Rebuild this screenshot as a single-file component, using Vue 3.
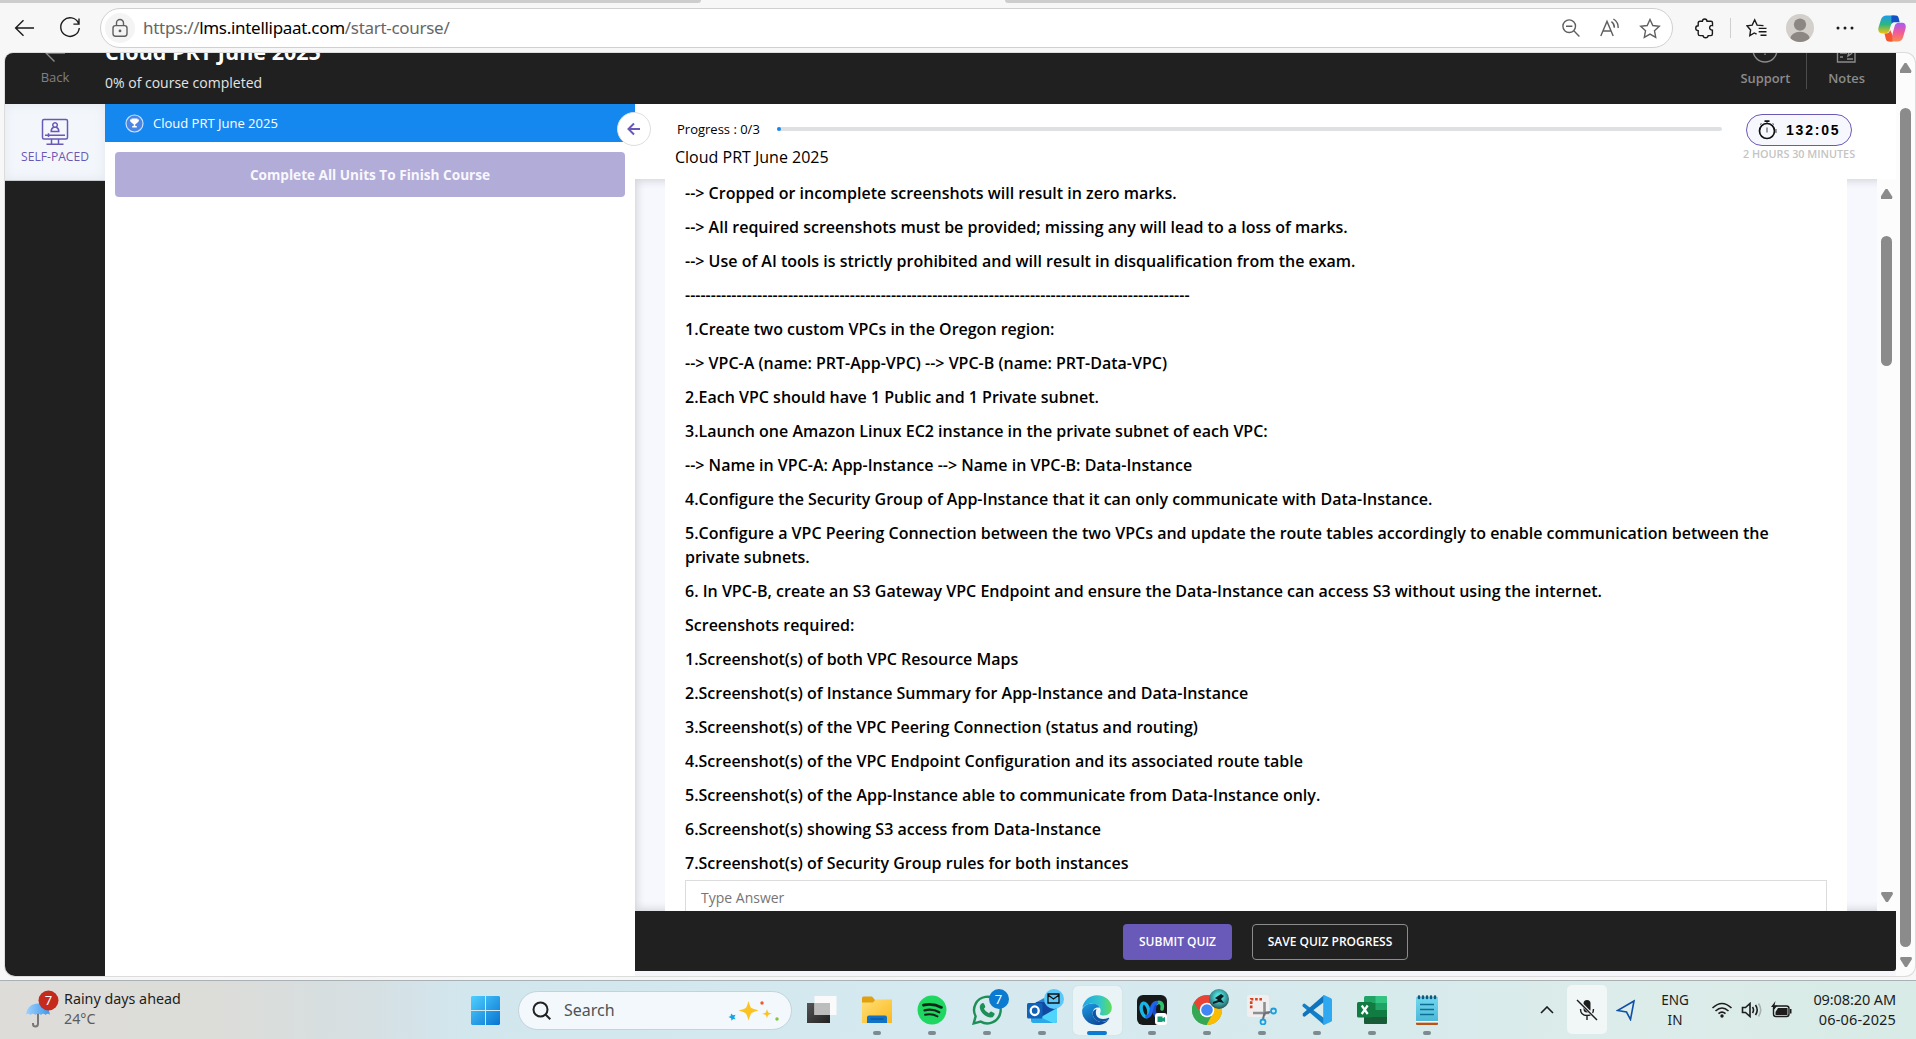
<script setup>
const lines = [
  '--> Cropped or incomplete screenshots will result in zero marks.',
  '--> All required screenshots must be provided; missing any will lead to a loss of marks.',
  '--> Use of AI tools is strictly prohibited and will result in disqualification from the exam.',
  '-'.repeat(98),
  '1.Create two custom VPCs in the Oregon region:',
  '--> VPC-A (name: PRT-App-VPC) --> VPC-B (name: PRT-Data-VPC)',
  '2.Each VPC should have 1 Public and 1 Private subnet.',
  '3.Launch one Amazon Linux EC2 instance in the private subnet of each VPC:',
  '--> Name in VPC-A: App-Instance --> Name in VPC-B: Data-Instance',
  '4.Configure the Security Group of App-Instance that it can only communicate with Data-Instance.',
  '5.Configure a VPC Peering Connection between the two VPCs and update the route tables accordingly to enable communication between the private subnets.',
  '6. In VPC-B, create an S3 Gateway VPC Endpoint and ensure the Data-Instance can access S3 without using the internet.',
  'Screenshots required:',
  '1.Screenshot(s) of both VPC Resource Maps',
  '2.Screenshot(s) of Instance Summary for App-Instance and Data-Instance',
  '3.Screenshot(s) of the VPC Peering Connection (status and routing)',
  '4.Screenshot(s) of the VPC Endpoint Configuration and its associated route table',
  '5.Screenshot(s) of the App-Instance able to communicate from Data-Instance only.',
  '6.Screenshot(s) showing S3 access from Data-Instance',
  '7.Screenshot(s) of Security Group rules for both instances',
]
</script>

<template>
  <div class="screen">
    <div class="tabs"><i class="tab-left"></i><i class="tab-right"></i></div>

    <header class="toolbar">
      <svg class="nav-back" width="22" height="20" viewBox="0 0 22 20"><path d="M20 10H2M9.5 2.2 1.6 10l7.9 7.8" /></svg>
      <svg class="nav-reload" width="24" height="24" viewBox="0 0 24 24"><path d="M20.5 7.2A9.3 9.3 0 1 0 21.3 12M21 2.5v5.6h-5.6" /></svg>
      <div class="address">
        <span class="lock">
          <svg width="18" height="20" viewBox="0 0 18 20"><rect x="2" y="7.6" width="14" height="10.6" rx="2.4" /><path d="M5.5 7.5V5a3.5 3.5 0 0 1 7 0v2.5" /><circle cx="9" cy="12.9" r="0.7" /></svg>
        </span>
        <span class="url">https://<b>lms.intellipaat.com</b>/start-course/</span>
        <span class="addr-icons">
          <svg width="20" height="20" viewBox="0 0 20 20"><circle cx="8.2" cy="8.2" r="6.3" /><path d="M5 8.2h6.4M12.8 12.8l5.6 5.6" /></svg>
          <svg width="22" height="20" viewBox="0 0 22 20"><path d="M1.8 18 8 3.4 14.2 18M4 13h8M12.4 3.7q3 1.9 3 6M14.4 1q5 3 4.8 9" /></svg>
          <svg width="22" height="21" viewBox="0 0 22 21"><path d="m11 1.500 2.800 6 6.500.8-4.800 4.500 1.200 6.500-5.700-3.200-5.700 3.200 1.200-6.500L1.700 8.300l6.500-.8z" /></svg>
        </span>
      </div>
      <div class="tools">
        <svg class="t-ext" width="22" height="22" viewBox="0 0 22 22"><path d="M6 4.200h2.400c.1-3 4.500-3 4.600 0H17q1.500 0 1.500 1.500V8.500c-3.400-.8-4.200 4.600-.1 4.700v3.900q0 1.500-1.500 1.500h-2.700c-.5 2.800-4.700 2.800-5.200 0H6q-1.800 0-1.800-1.700V13.600c-3.300-.2-3.300-4.600 0-4.800V6Q4.200 4.200 6 4.200z" /></svg>
        <i class="t-sep"></i>
        <svg class="t-fav" width="22" height="20" viewBox="0 0 22 20"><path d="M10.600 16.200 8.300 15l-4.500 2.700.8-5.700L1 7.800l5.200-.7 2.500-5.300 2.400 5.300 6.400.5M12.700 10.400h7.800M12.700 13.800h7.800M14.500 17.200h6" /></svg>
        <svg class="t-user" width="28" height="28" viewBox="0 0 28 28"><clipPath id="uc"><circle cx="14" cy="14" r="14" /></clipPath><g clip-path="url(#uc)"><rect width="28" height="28" fill="#d3d0cb" /><circle cx="14" cy="10.600" r="6.100" fill="#8c8782" /><ellipse cx="14" cy="25" rx="10" ry="7.200" fill="#8c8782" /></g></svg>
        <svg class="t-more" width="18" height="4" viewBox="0 0 18 4"><circle cx="2" cy="2" r="1.500" /><circle cx="9" cy="2" r="1.500" /><circle cx="16" cy="2" r="1.500" /></svg>
        <svg class="t-cop" width="28" height="27" viewBox="0 0 28 27">
          <defs>
            <linearGradient id="ca" x1="0" y1="0" x2="0" y2="1"><stop offset="0" stop-color="#1d9bf0" /><stop offset=".5" stop-color="#2eb67d" /><stop offset="1" stop-color="#f4c20d" /></linearGradient>
            <linearGradient id="cb" x1="0" y1="0" x2="0" y2="1"><stop offset="0" stop-color="#a45cf5" /><stop offset=".5" stop-color="#f0599b" /><stop offset="1" stop-color="#f98a4b" /></linearGradient>
          </defs>
          <path fill="url(#ca)" d="M8.500.5H17c-1.800 1-2.400 3.400-3 5.500L11.500 15c-.7 2.300-2 3.500-4.500 3.500H4C1 18.500-.2 16 .5 12.500L3 4.500C4 1.800 5.800.5 8.500.5z" />
          <path fill="#1352c4" d="M13.500.5H18c1.500 0 2.400 1.200 2.800 3l.8 3.800H17c-2 0-3 .6-3.700 2.300z" />
          <path fill="url(#cb)" d="M19.500 26.500H11c1.800-1 2.400-3.400 3-5.500l2.500-9.500c.7-2.600 2-3.700 4.500-3.700h3.300c2.600 0 4 2.200 3.300 5.700l-2.600 9c-.8 2.600-2.800 4-5.500 4z" />
          <path fill="#f4572e" d="M14.500 26.500H10.600c-1.600 0-2.500-1.200-2.900-3L6.500 18.500H8c2.300 0 3.300-1 4.200-3.500l1.800 4z" />
        </svg>
      </div>
    </header>

    <main class="page">
      <div class="app">
        <div class="top">
          <div class="back"><svg width="22" height="20" viewBox="0 0 22 20"><path d="M21 10H2M10 2 2 10l8.500 8.500" /></svg><span>Back</span></div>
          <div class="course"><h1>Cloud PRT June 2025</h1><p>0% of course completed</p></div>
          <div class="top-right">
            <div class="support"><svg width="28" height="28" viewBox="0 0 28 28"><circle cx="14" cy="14" r="12" /><path d="M14 8v6.500M14 17.500v1.500" /></svg><span>Support</span></div>
            <i></i>
            <div class="notes"><svg width="24" height="24" viewBox="0 0 24 24"><path d="M14 2H2.500v20H20V13M5 13h7M5 17h3M12 19h6M5 9h8M13 16l1-4 7-8 2 2-7 8z" /></svg><span>Notes</span></div>
          </div>
        </div>
        <div class="body">
          <nav class="rail">
            <div class="self">
              <svg width="28" height="28" viewBox="0 0 28 28"><rect x="1.500" y="1.500" width="25" height="19.500" rx="1.500" /><path d="M4 17.200h20M7.500 15.300v3.800M10.500 21v4.500M17.500 21v4.500M5.500 26.200h17" /><path class="fine" d="M10.200 13.500q0-3.500 2.600-4.200h2.400q2.600.7 2.600 4.200zM14 9.300a2.300 2.300 0 1 1 .1 0z" /></svg>
              <span>SELF-PACED</span>
            </div>
          </nav>
          <aside class="side">
            <div class="unit">
              <svg width="19" height="19" viewBox="0 0 19 19"><circle cx="9.500" cy="9.500" r="8.500" fill="#4a86e8" stroke="#c9e0fb" stroke-width="1.200" /><path fill="#fff" d="M6.500 4.500h6v1h1.500c0 2-.8 3-2 3.200-.4.800-1 1.200-1.700 1.400v1.800h1.500v1.600H7.200v-1.600h1.500v-1.800c-.7-.2-1.300-.6-1.700-1.400-1.200-.2-2-1.200-2-3.200h1.500z" /></svg>
              <span>Cloud PRT June 2025</span>
            </div>
            <button class="finish">Complete All Units To Finish Course</button>
          </aside>
          <section class="main">
            <span class="collapse"><svg width="14" height="14" viewBox="0 0 14 14"><path d="M13 7H1.500M7 1.500 1.500 7 7 12.500" /></svg></span>
            <div class="quiz-head">
              <div class="qh-left">
                <div class="progress"><span>Progress : 0/3</span><div class="bar"><i></i></div></div>
                <h2>Cloud PRT June 2025</h2>
              </div>
              <div class="qh-right">
                <div class="timer">
                  <svg width="20" height="20" viewBox="0 0 20 20"><circle cx="9" cy="11" r="7.500" /><path d="M6.500 1.200h5" /><path class="thin" d="M9 1.500V3M9 7.500v5m-7-8 1.500-1M16 4.500l-1.500-1M18 9v4" /></svg>
                  <span>132:05</span>
                </div>
                <div class="dur">2 HOURS 30 MINUTES</div>
              </div>
            </div>
            <div class="quiz-body">
              <div class="sheet">
                <p v-for="(l, i) in lines" :key="i">{{ l }}</p>
                <div class="answer">Type Answer</div>
              </div>
              <div class="inner-scroll">
                <i class="up"></i><i class="thumb"></i><i class="down"></i>
              </div>
            </div>
            <div class="actions">
              <button class="submit">SUBMIT QUIZ</button>
              <button class="save">SAVE QUIZ PROGRESS</button>
            </div>
          </section>
        </div>
        <div class="under"></div>
      </div>
      <div class="outer-scroll"><i class="up"></i><i class="thumb"></i><i class="down"></i></div>
    </main>

    <footer class="taskbar">
      <div class="weather">
        <svg width="34" height="38" viewBox="0 0 34 38">
          <defs><linearGradient id="um" x1="0" x2="1"><stop offset="0" stop-color="#9fd0fb" /><stop offset="1" stop-color="#3c97ee" /></linearGradient></defs>
          <path d="M13 20v13.500q0 3-2.500 3T8 34v-1" fill="none" stroke="#777" stroke-width="2" /><path d="M1 25C2 17 7 13.500 13 13.500S24 17 25 25q-2-2.500-4.500 0-2.500-2.500-4.500 0-3-2.500-5.500 0-2.500-2.500-5 0Q3 22.500 1 25z" fill="url(#um)" /><circle cx="23.500" cy="10.500" r="10" fill="#c42b1c" />
          <text x="23.500" y="15" fill="#fff" text-anchor="middle" font-size="13" font-family="Noto Sans, sans-serif">7</text>
        </svg>
        <div class="forecast"><p class="w1">Rainy days ahead</p><p class="w2">24°C</p></div>
      </div>

      <div class="center">
        <svg class="win" width="29" height="29" viewBox="0 0 29 29"><defs><linearGradient id="wg" x1="0" y1="0" x2="1" y2="1"><stop offset="0" stop-color="#4fd0ff" /><stop offset="1" stop-color="#0873d2" /></linearGradient></defs><path fill="url(#wg)" d="M1 0h13v14H0V1zM15 0h13l1 1v13H15zM0 15h14v14H1l-1-1zM15 15h14v13l-1 1H15z" /></svg>
        <div class="search">
          <svg width="20" height="20" viewBox="0 0 20 20"><circle cx="8.500" cy="8.500" r="7" /><path d="m13.500 13.500 4.800 4.800" /></svg>
          <span>Search</span>
          <svg class="spark" width="52" height="24" viewBox="0 0 52 24"><path fill="#fbc220" d="M20.500 2q1.800 6.500 2.800 7t7.200 2.500q-6.200 1.500-7.200 2.800T20.500 21.500q-1.500-6-2.800-7.200T10.500 11.500q6-1.500 7.200-2.500t2.800-7zM39 10q.8 3 1.300 3.500t3.700 1.200q-3 .6-3.700 1.300T39 19.500q-.7-3-1.300-3.500T34 14.700q3-.5 3.700-1.200T39 10z" /><path fill="#16a4e8" d="m3 14.500 2 1.700 2.500-.5-1.200 2.500 1.200 2-2.300-.2-1.700 1.700-.4-2.400L.5 18l2.200-1z" /><circle cx="34" cy="4" r="1.700" fill="#f0592a" /><circle cx="49" cy="20" r="1.700" fill="#83c341" /></svg>
        </div>

        <div class="task nodot"><svg viewBox="0 0 30 30"><defs><linearGradient id="tv" x1="0" y1="0" x2="1" y2="1"><stop offset="0" stop-color="#555" /><stop offset="1" stop-color="#222" /></linearGradient></defs><rect x="0" y="8" width="23" height="20" fill="url(#tv)" /><rect x="7.500" y="1" width="22" height="19" fill="#fafafa" /><rect x="7.500" y="8" width="15.500" height="12" fill="#bdbdbd" /></svg></div>
        <div class="task"><svg viewBox="0 0 30 30"><defs><linearGradient id="fo" x1="0" y1="0" x2="1" y2="1"><stop offset="0" stop-color="#ffe07a" /><stop offset="1" stop-color="#fbb81b" /></linearGradient></defs><path fill="#e0a010" d="M0 3q0-1.500 1.500-1.500H10l3 3.500h17v6H0z" /><path fill="url(#fo)" d="M0 7.500h11l2.500-3H30V28H0z" /><path fill="#1173c7" d="M5 28v-5.500Q5 20.500 7 20.500h16q2 0 2 2V28z" /><path stroke="#0a4d90" d="M8.500 24h13" /></svg></div>
        <div class="task"><svg viewBox="0 0 30 30"><circle cx="15" cy="15" r="14.500" fill="#1ed760" /><path fill="none" stroke="#10251a" stroke-linecap="round" stroke-width="2.800" d="M6.500 10.200q9-2.500 18 2.200" /><path fill="none" stroke="#10251a" stroke-linecap="round" stroke-width="2.300" d="M7.500 15.300q8-2 14.800 1.900" /><path fill="none" stroke="#10251a" stroke-linecap="round" stroke-width="1.900" d="M8 19.800q7-1.500 12.500 1.600" /></svg></div>
        <div class="task"><svg viewBox="0 0 30 30"><path fill="none" stroke="#1d8f57" stroke-width="2.400" d="M1.700 28.400 3.600 21.300A13.300 13.300 0 1 1 8.700 26.600z" /><path fill="#1d8f57" d="M10 8.200q1.500-.8 2.200.8l1.100 2.600q.2.800-1.400 2.200 1.500 3 5 4.500 1.500-2 2.200-1.800l3 1.500q.8.400.4 1.800-1 3-4.300 2.700C12 21.500 7.300 15.500 7.800 11.500q.4-2.200 2.200-3.300z" /></svg><b class="badge">7</b></div>
        <div class="task"><svg viewBox="0 0 30 30"><path fill="#2583d0" d="M6 9 19 2l11 7v17q0 2-2 2H6z" /><path fill="#1248a0" d="M9 7h16l5 4v4l-16 9z" /><path fill="#4fd5fb" d="M14 22l16-9v13q0 2-2 2H7q-3 0-3-3z" /><path fill="#2aa8e8" d="M4 23h11l11 5H7q-3 0-3-3z" /><rect x="0" y="8" width="15.500" height="15.500" rx="1.500" fill="#0f62b8" /><ellipse cx="7.700" cy="15.700" rx="4" ry="4.300" fill="none" stroke="#fff" stroke-width="2.300" /></svg><b class="badge mail"><svg width="13" height="11" viewBox="0 0 13 11"><path fill="none" stroke="#111" stroke-width="1.300" d="M1 1h11v9H1zM1 2l5.500 4L12 2" /></svg></b></div>
        <div class="task active"><svg viewBox="0 0 30 30"><defs><linearGradient id="e1" x1="0" y1=".3" x2="1" y2=".3"><stop offset="0" stop-color="#1fa4e2" /><stop offset=".6" stop-color="#33c7c9" /><stop offset="1" stop-color="#5fdd58" /></linearGradient><linearGradient id="e2" x1="0" y1="0" x2=".6" y2="1"><stop offset="0" stop-color="#1b9de2" /><stop offset="1" stop-color="#0c4a9c" /></linearGradient></defs><path fill="url(#e1)" d="M.3 13C1.500 5.500 7.500.2 15 .2c8.500 0 14.800 6 14.800 12.300 0 5-3.500 8-8 8-3.800 0-4.500-1.500-3.500-2.800C20 14 16.500 8.500 10.500 8.500 5.500 8.500 1.500 11 .3 13z" /><path fill="url(#e2)" d="M.1 16C.1 11.500 5 8.500 10.500 8.500c3.500 0 6.500 2 7.200 4.500-3-1.500-7 .5-7 5.500 0 4.500 4 8.500 9 8.500 3 0 4.500-.5 7-2.500-2 3.500-6.500 5.500-11.500 5.500C6.500 30 .1 23.500.1 16z" /><path fill="#0f55a6" d="M10.700 18.500c0 4.500 4 8.500 9 8.500 3 0 5.300-1 7.300-3 .6-.8 0-1.500-.9-1C19 26 11.500 22.500 14.500 14q-3.800 1-3.800 4.500z" /></svg></div>
        <div class="task"><svg viewBox="0 0 30 30"><rect width="30" height="30" rx="6" fill="#16181a" /><path fill="none" stroke="#2fc46b" stroke-width="3.600" stroke-linecap="round" d="M18 9.500q3-3.500 6-1.500 2 2 1 6" /><path fill="none" stroke="#1a47c8" stroke-width="3.600" stroke-linecap="round" d="M18 10q-2 7 1 11" /><ellipse cx="8" cy="15" rx="3.600" ry="7" fill="none" stroke="#18b6e6" stroke-width="3.400" transform="rotate(-14 8 15)" /><path fill="none" stroke="#1e62f0" stroke-width="3.600" stroke-linecap="round" d="M10 21.500q3.500-.5 4.500-7t5-7" /><rect x="18" y="18" width="12" height="12" rx="3" fill="#fff" /><path fill="#149c74" d="M20.500 21.500h5v1.700l2.500-1.200v5l-2.500-1v1h-5z" /></svg></div>
        <div class="task"><svg viewBox="0 0 30 30"><circle cx="15" cy="15" r="15" fill="#34a853" /><path fill="#fbbc04" d="M15 15 28 7.500A15 15 0 0 1 15 30l-1-3z" /><path fill="#34a853" d="M15 15 2 7.500A15 15 0 0 0 14.500 30l6-11z" /><path fill="#ea4335" d="M2 7.500 8.500 18 15 8h13A15 15 0 0 0 2 7.500z" /><circle cx="15" cy="15" r="7.300" fill="#fff" /><circle cx="15" cy="15" r="5.800" fill="#4285f4" /></svg><b class="badge surf"><svg width="20" height="20" viewBox="0 0 20 20"><path d="m4 13 5-2-3-2 6-4 3 2-3 3 3 4-5-1-6 2z" fill="#0a1c20" /></svg></b></div>
        <div class="task"><svg viewBox="0 0 30 30"><rect width="22" height="22" rx="2.500" fill="#f0eeee" /><path fill="none" stroke="#d4431e" stroke-width="2.600" stroke-dasharray="2.600 1.700" d="M15 4.200H4.200V15" /><path stroke="#8d8f93" stroke-width="2.600" d="M17.500 7v13.500M6 18h16" /><path stroke="#6d7075" stroke-width="2" d="M17.500 18 16 24M17.500 18l6-1" /><circle cx="16" cy="27" r="2.500" fill="none" stroke="#1aa0e0" stroke-width="1.800" /><circle cx="26.500" cy="16" r="2.500" fill="none" stroke="#1aa0e0" stroke-width="1.800" /></svg></div>
        <div class="task"><svg viewBox="0 0 30 30"><path fill="#1180c8" d="M2.500 8.500 22 23v7L.8 11.500q-.8-1 0-2l.7-.8z" /><path fill="#0f74bd" d="M.8 18.500 22 0v7L3 21.500q-1 .3-1.500 0l-.8-1z" /><path fill="#2fa8f2" d="M22 0l7 3.300q1 .5 1 1.500v20.400q0 1-1 1.500L22 30l-.8-.8V1z" /></svg></div>
        <div class="task"><svg viewBox="0 0 30 30"><rect x="7" y="1" width="23" height="28" rx="1.500" fill="#21a366" /><path fill="#33c481" d="M18.500 1H28.500q1.500 0 1.500 1.500V8H18.500z" /><path fill="#107c41" d="M7 8h11.500v7H30v7H7z" /><path fill="#185c37" d="M7 22h23v5.500q0 1.500-1.500 1.500h-20Q7 29 7 27.500z" /><rect x="0" y="7" width="15.500" height="15.500" rx="1.500" fill="#107c41" /><path stroke="#fff" stroke-width="2.200" d="m4.700 10.500 6 8.500M10.700 10.500l-6 8.500" /></svg></div>
        <div class="task"><svg viewBox="0 0 30 30"><defs><linearGradient id="np" x1="0" y1="0" x2="0" y2="1"><stop offset="0" stop-color="#73d8f0" /><stop offset="1" stop-color="#4cb9d8" /></linearGradient></defs><rect x="4" y="26" width="22" height="4" rx="1" fill="#b4561a" /><rect x="4" y="25" width="22" height="2.600" fill="#fff" /><path fill="url(#np)" d="M4 2h22v24H4z" /><path stroke="#0e6f95" stroke-width="1.700" d="M8 9.500h14M8 14.500h14M8 19.500h14" /><path stroke="#0b5a80" stroke-width="2.600" stroke-linecap="round" d="M7 1.500v1.500M11 1.500v1.500M15 1.500v1.500M19 1.500v1.500M23 1.500v1.500" /></svg></div>
      </div>

      <div class="tray">
        <svg class="chev" width="14" height="8" viewBox="0 0 14 8"><path d="m1 7 6-6 6 6" /></svg>
        <span class="mic"><svg width="22" height="22" viewBox="0 0 22 22"><rect x="7.500" y="1" width="7" height="12.500" rx="3.500" fill="#1c1c1c" /><path fill="none" stroke="#1c1c1c" stroke-width="1.400" d="M4.500 10q0 6.500 6.500 6.500T17.500 10M11 16.500V21" /><path stroke="#f2f7f7" stroke-width="3" d="M2 1.500 20.500 20" /><path stroke="#1c1c1c" stroke-width="1.400" d="M1 1 21 21" /></svg></span>
        <svg class="loc" width="20" height="22" viewBox="0 0 20 22"><path d="M18 2 1.500 11.500l9 1.500 4 7.500z" /></svg>
        <div class="lang"><span>ENG</span><span>IN</span></div>
        <svg class="wifi" width="22" height="16" viewBox="0 0 22 16"><path d="M1.500 6Q11-3 20.500 6M4.500 9q6.500-6 13 0M7.500 11.700q3.500-3 7 0" /><circle cx="11" cy="14" r="1.700" /></svg>
        <svg class="vol" width="22" height="16" viewBox="0 0 22 16"><path d="M1.500 5.500h3L9 1.500v13l-4.500-4h-3zM11.500 5q2 3 0 6M14.500 3q3.400 5 0 10" /><path class="dim" d="M17.500 1.500q4.500 6.500 0 13" /></svg>
        <svg class="bat" width="22" height="18" viewBox="0 0 22 18"><rect x="2.500" y="5" width="15.500" height="10.500" rx="2.500" fill="none" stroke="#1c1c1c" stroke-width="1.400" /><path fill="#1c1c1c" d="M7 7h9.500v7H4.500v-3zM19 8h1.500v4.500H19zM4.500 0 0 6h3l-1 4 4.500-5.500h-3z" /></svg>
        <div class="clock"><span>09:08:20 AM</span><span class="date">06-06-2025</span></div>
      </div>
    </footer>
  </div>
</template>

<style>
body { margin: 0; overflow: hidden; }
</style>

<style scoped>
* { box-sizing: border-box; }
p, h1, h2 { margin: 0; }
svg { display: block; flex: none; }
.screen { width: 1916px; height: 1039px; display: flex; flex-direction: column; overflow: hidden; background: #f7f7f7; font-family: "Open Sans", "Noto Sans", sans-serif; color: #000; }
span { white-space: nowrap; }

.tabs { display: flex; justify-content: space-between; height: 3px; flex: none; }
.tabs i { background: #cdcdcd; }
.tab-left { width: 701px; border-bottom-right-radius: 4px; }
.tab-right { width: 911px; border-bottom-left-radius: 4px; }

.toolbar { height: 50px; flex: none; display: flex; align-items: center; padding: 0 0 0 14px; }
.toolbar svg { fill: none; stroke: #1a1a1a; stroke-width: 1.4; }
.nav-reload { margin-left: 22px; }
.address { display: flex; align-items: center; width: 1573px; height: 40px; margin-left: 18px; padding: 0 11px 0 4px; border: 1px solid #d0d0d0; border-radius: 20px; background: #fff; }
.lock { width: 30px; height: 30px; border-radius: 15px; background: #f4f4f4; display: flex; align-items: center; justify-content: center; }
.address svg { stroke: #5f5f5f; }
.url { margin-left: 8px; padding-bottom: 2px; font: 17px "Noto Sans", sans-serif; color: #666; letter-spacing: -0.3px; }
.url b { font-weight: 400; color: #000; }
.addr-icons { margin-left: auto; display: flex; align-items: center; gap: 18px; }
.tools { display: flex; align-items: center; margin-left: 21px; }
.t-sep { width: 1px; height: 20px; background: #cfcfcf; margin: 0 15px 0 14px; }
.t-user { margin-left: 18px; }
.toolbar .t-user, .toolbar .t-more, .toolbar .t-cop { stroke: none; }
.toolbar .t-more { margin-left: 22px; fill: #1a1a1a; }
.toolbar .t-cop { margin-left: 24px; }

.page { display: flex; height: 923px; margin: 0 1px 0 5px; border-radius: 8px 10px 10px 10px; overflow: hidden; background: #fcfcfc; box-shadow: 0 0 0 1px #dcdcdc; flex: none; }
.app { width: 1891px; display: flex; flex-direction: column; }
.top { height: 51px; flex: none; background: #202020; display: flex; overflow: hidden; align-items: flex-end; }
.back { width: 80px; height: 50px; display: flex; flex-direction: column; align-items: center; justify-content: flex-end; padding: 0 0 18px; margin: 0 10px; color: #808080; font-size: 13px; line-height: 18px; gap: 5px; }
.back svg, .support svg, .notes svg { fill: none; stroke: #8b8b8b; stroke-width: 1.4; }
.course { width: 300px; height: 66px; flex: none; display: flex; flex-direction: column; }
.course h1 { color: #fff; font-size: 21.550px; line-height: 28px; font-weight: 700; }
.course p { color: #e4e4e4; font-size: 14px; line-height: 20px; margin-top: 7px; }
.top-right { margin-left: auto; display: flex; align-items: flex-end; color: #8b8b8b; font-size: 12.900px; line-height: 18px; font-weight: 600; padding-right: 31px; height: 51px; }
.top-right i { width: 1px; height: 80px; background: #4c4c4c; margin: 0 21px 15px 16px; }
.support, .notes { display: flex; flex-direction: column; align-items: center; padding-bottom: 17px; gap: 5px; }

.body { display: flex; height: 867px; }
.rail { width: 100px; height: 872px; background: #202020; flex: none; }
.self { height: 77px; background: #f3f7fc; display: flex; flex-direction: column; align-items: center; padding-top: 14px; gap: 2px; color: #6a58b7; font-size: 12.100px; line-height: 17px; border-bottom: 1px solid #c8ccd0; box-shadow: inset 0 0 12px #e3e8ee; }
.self svg { fill: none; stroke: #6a58b7; stroke-width: 1.5; }
.side { width: 530px; flex: none; background: #fff; height: 872px; }
.unit { height: 38px; background: #1588ef; color: #fff; font-size: 13px; display: flex; align-items: center; padding-left: 20px; gap: 9px; }
.finish { display: block; width: 510px; height: 45px; margin: 10px 0 0 10px; border: 0; border-radius: 4px; background: #b2acd9; color: #f8f7fd; font: 700 13.600px "Open Sans", sans-serif; }
.main { width: 1261px; position: relative; display: flex; flex-direction: column; background: #fff; }
.collapse { position: absolute; left: -18px; top: 8px; width: 34px; height: 34px; border-radius: 17px; background: #fff; border: 1px solid #dedede; display: flex; align-items: center; justify-content: center; z-index: 2; }
.collapse svg { fill: none; stroke: #6a58b7; stroke-width: 2; }
.quiz-head { height: 75px; flex: none; display: flex; justify-content: space-between; padding: 10px 40px 0 40px; }
.qh-left { width: 1047px; }
.progress { display: flex; align-items: center; justify-content: space-between; height: 30px; font-size: 13px; padding-left: 2px; }
.bar { width: 945px; height: 4px; border-radius: 2px; background: #dfe0e1; }
.bar i { display: block; width: 4px; height: 4px; border-radius: 2px; background: #1588ef; }
h2 { font-size: 16px; font-weight: 400; line-height: 24px; margin-top: 1px; }
.qh-right { width: 114px; display: flex; flex-direction: column; align-items: center; }
.timer { width: 106px; height: 32px; border: 1px solid #6a58b7; border-radius: 16px; background: #f7f8fd; display: flex; align-items: center; padding-left: 11px; gap: 8px; font: 700 14px "Liberation Sans", sans-serif; letter-spacing: 1.800px; }
.timer svg { fill: none; stroke: #111; stroke-width: 1.700; }
.timer .thin { stroke-width: .8; }
.dur { color: #c4c4c4; font-size: 10.800px; line-height: 16px; font-weight: 600; white-space: nowrap; }
.quiz-body { height: 732px; flex: none; background: #f7f8fd; display: flex; padding-left: 30px; box-shadow: inset 8px 0 8px -6px #d3d5db, inset 0 8px 8px -6px #d3d5db, inset 0 -8px 8px -6px #d3d5db; overflow: hidden; }
.sheet { width: 1182px; background: #fff; padding: 2px 20px 0; font-size: 16px; font-weight: 600; line-height: 24px; }
.sheet p { margin-bottom: 10px; }
.answer { border: 1px solid #dcdcdc; height: 60px; margin-top: -5px; padding: 5px 15px; font-size: 14px; font-weight: 400; color: #757575; }
.inner-scroll { width: 19px; margin-left: 30px; background: #fcfcfc; display: flex; flex-direction: column; align-items: center; padding-top: 10px; }
.up, .down { width: 12px; height: 10px; background: #8b8b8b; clip-path: polygon(42% 0, 58% 0, 100% 80%, 95% 100%, 5% 100%, 0 80%); flex: none; }
.down { transform: rotate(180deg); }
.thumb { width: 11px; border-radius: 6px; background: #8b8b8b; }
.inner-scroll .thumb { height: 130px; margin: 37px 0 526px; }
.actions { height: 60px; flex: none; background: #202020; display: flex; align-items: center; justify-content: center; gap: 20px; padding-top: 2px; border-radius: 0 0 3px 0; }
.actions button { height: 36px; border-radius: 4px; color: #fff; font: 600 12px "Open Sans", sans-serif; padding: 0 0 1px; }
.submit { width: 109px; background: #6959b8; border: 0; }
.save { width: 156px; background: transparent; border: 1px solid #8c8c8c; }
.under { height: 5px; margin-left: 630px; background: #f5f6fb; }
.outer-scroll { width: 19px; display: flex; flex-direction: column; align-items: center; padding-top: 10px; }
.outer-scroll .thumb { height: 839px; margin: 35px 0 10px; }

.taskbar { height: 59px; margin-top: 4px; flex: none; border-top: 1px solid #a9b1b5; background: linear-gradient(90deg, #dedcd8 0, #dcdcd8 11%, #d6dfe2 19%, #d2e6ee 24%, #d5e9f0 50%, #d7eaec 72%, #dcecea 85%, #d8ebe6 100%); display: flex; align-items: center; font-family: "Noto Sans", sans-serif; color: #1c1c1c; }
.weather { display: flex; align-items: center; gap: 5px; padding: 0 0 2px 25px; width: 471px; }
.forecast { padding-bottom: 1px; }
.w1, .w2 { font-size: 14.300px; line-height: 20px; }
.w2 { color: #5c5c5c; }
.center { display: flex; align-items: center; height: 58px; }
.win { margin-top: 1px; }
.search { width: 274px; height: 39px; margin: 1px 2.500px 0 18px; border: 1px solid #c3d3da; border-radius: 20px; background: #f2f8fb; display: flex; align-items: center; padding: 0 11px 0 13px; color: #4e5356; font-size: 16px; }
.search > svg:first-child { fill: none; stroke: #222; stroke-width: 2; margin-right: 12px; }
.search span { padding-bottom: 1px; }
.spark { margin-left: auto; }
.task { width: 49px; height: 49px; margin: 0 3px; position: relative; display: flex; justify-content: center; align-items: flex-start; padding-top: 9px; border-radius: 5px; flex: none; }
.task > svg { width: 30px; height: 30px; }
.task::after { content: ""; position: absolute; bottom: 0; left: 20px; width: 8px; height: 4px; border-radius: 2px; background: #7d8a8f; }
.task.nodot::after { display: none; }
.task.active { background: #eaf4f7; box-shadow: 0 0 1px #b5c6cc; }
.task.active::after { left: 14px; width: 20px; background: #0b7ad1; }
.badge { position: absolute; left: 26px; top: 3px; width: 20px; height: 20px; border-radius: 10px; background: #0b7ad1; color: #fff; font-size: 13px; font-weight: 400; line-height: 20px; display: flex; align-items: center; justify-content: center; }
.badge.mail { background: #5bc8fb; }
.badge.surf { background: radial-gradient(circle at 50% 40%, #4de0e0 20%, #1d3138 90%); }
.tray { margin-left: auto; display: flex; align-items: center; padding: 0 20px 1px 0; }
.chev, .loc, .wifi, .vol { fill: none; stroke: #1c1c1c; stroke-width: 1.6; }
.wifi circle { fill: #1c1c1c; stroke: none; }
.vol .dim { stroke: #a5b2b0; }
.mic { width: 40px; height: 49px; border-radius: 5px; background: #f0f7f6; display: flex; align-items: center; justify-content: center; margin: 0 9px 0 13px; }
.loc { stroke: #0f4fa8; }
.lang { display: flex; flex-direction: column; align-items: center; font-size: 13.500px; line-height: 20px; width: 30px; margin: 0 21px 0 24px; }
.vol { margin: 0 8px; }
.clock { display: flex; flex-direction: column; align-items: flex-end; font-size: 14.500px; line-height: 20px; width: 84px; margin-left: 19px; padding-bottom: 1px; letter-spacing: -0.1px; }
.date { letter-spacing: 0.150px; }
</style>
